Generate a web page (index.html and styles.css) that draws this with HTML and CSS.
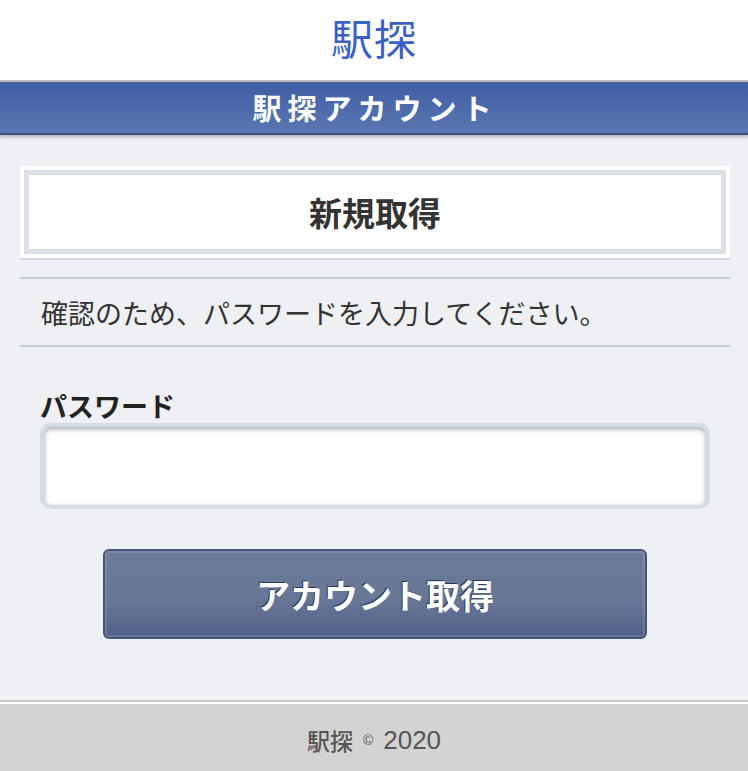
FILE: index.html
```html
<!DOCTYPE html>
<html lang="ja">
<head>
<meta charset="utf-8">
<title>駅探アカウント</title>
<link rel="stylesheet" href="styles.css">
</head>
<body>
<header class="site-header">
  <div class="logo">駅探</div>
</header>
<div class="titlebar"><h1>駅探アカウント</h1></div>
<main class="content">
  <div class="panel"><h2>新規取得</h2></div>
  <p class="notice">確認のため、パスワードを入力してください。</p>
  <form class="form">
    <label class="label" for="pw">パスワード</label>
    <input class="input" id="pw" type="password">
    <div class="actions"><button type="button" class="btn">アカウント取得</button></div>
  </form>
</main>
<footer class="footer"><span class="brand">駅探</span><span class="copy">©</span><span class="year">2020</span></footer>
</body>
</html>
```
FILE: styles.css
```css
html, body {
  margin: 0;
  padding: 0;
}
body {
  background: #eff0f4;
  font-family: "Noto Sans CJK JP", "Noto Sans", sans-serif;
  color: #333;
}
.site-header {
  background: #fff;
  height: 80px;
  border-bottom: 2px solid #bcbcbc;
  display: flex;
  align-items: center;
  justify-content: center;
}
.logo {
  color: #3a62c4;
  font-size: 42px;
  line-height: 1;
  margin-top: -6px;
  letter-spacing: 1px;
}
.titlebar {
  height: 51px;
  background: linear-gradient(#3f5ea4, #5a77b2);
  border-bottom: 2px solid #3a4d80;
  box-shadow: 0 2px 3px rgba(0,0,0,0.25);
  display: flex;
  align-items: center;
  justify-content: center;
}
.titlebar h1 {
  margin: 0 0 0 2px;
  color: #fff;
  font-size: 29px;
  font-weight: 700;
  letter-spacing: 6px;
  line-height: 1;
}
.content {
  padding: 31px 18px 0 20px;
}
.panel {
  background: #fff;
  padding: 4px;
  border-bottom: 2px solid #d3d9e0;
}
.panel h2 {
  margin: 0;
  border: 5px solid #dce0e5;
  background: #fff;
  height: 74px;
  display: flex;
  align-items: center;
  justify-content: center;
  font-size: 33px;
  font-weight: 700;
  color: #333;
}
.notice {
  margin: 17px 0 0;
  border-top: 2px solid #c5ccd6;
  border-bottom: 2px solid #c5ccd6;
  padding: 0 21px;
  height: 66px;
  display: flex;
  align-items: center;
  font-size: 27px;
  color: #333;
}
.form {
  padding: 42px 20px 0 20px;
}
.label {
  display: block;
  font-size: 27px;
  font-weight: 700;
  color: #222;
  line-height: 34px;
}
.input {
  display: block;
  box-sizing: border-box;
  width: 670px;
  height: 86px;
  margin: 0;
  border: 4px solid #d3dbe3;
  border-radius: 11px;
  background: #fff;
  box-shadow: inset 0 2px 5px rgba(0,0,0,0.35);
}
.actions {
  padding: 40px 0 0 63px;
}
.btn {
  width: 544px;
  height: 90px;
  border: 2px solid #485576;
  border-radius: 6px;
  background: linear-gradient(#6b7a99 0%, #687796 55%, #52608a 100%);
  box-shadow: inset 0 0 0 2px rgba(255,255,255,0.12);
  color: #fff;
  font-family: "Noto Sans CJK JP", "Noto Sans", sans-serif;
  font-size: 34px;
  font-weight: 700;
  text-shadow: -1px -1px 0 #2a3454;
  cursor: pointer;
}
.footer {
  margin-top: 61px;
  border-top: 2px solid #c8c8c8;
  box-shadow: inset 0 2px 0 #fff;
  background: #d3d3d3;
  padding-top: 4px;
  height: 68px;
  display: flex;
  align-items: center;
  justify-content: center;
  color: #555;
}
.footer .brand {
  font-size: 23px;
  font-weight: 500;
}
.footer .copy {
  font-family: "Liberation Sans", sans-serif;
  font-size: 14px;
  margin: 0 10px 0 10px;
}
.footer .year {
  font-family: "Liberation Sans", sans-serif;
  font-size: 26px;
}
```
